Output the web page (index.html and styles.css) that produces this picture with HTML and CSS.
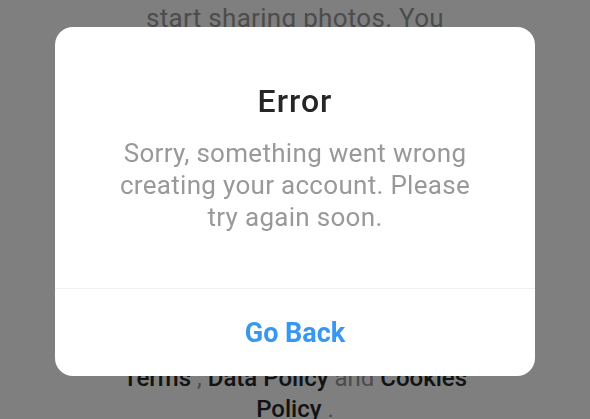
FILE: index.html
```html
<!DOCTYPE html>
<html lang="en">
<head>
<meta charset="utf-8">
<title>Error</title>
<link rel="stylesheet" href="styles.css">
</head>
<body>
<main class="page">
  <p class="intro">Find people to follow and start sharing photos. You can change your username anytime.</p>
  <p class="legal">By signing up, you agree to our <a class="link">Terms</a> , <a class="link">Data Policy</a> and <a class="link">Cookies Policy</a> .</p>
</main>
<div class="overlay">
  <div class="dialog" role="alertdialog">
    <div class="dialog-body">
      <h1 class="dialog-title">Error</h1>
      <p class="dialog-text">Sorry, something went wrong creating your account. Please try again soon.</p>
    </div>
    <button class="dialog-button" type="button">Go Back</button>
  </div>
</div>
</body>
</html>
```

FILE: styles.css
```css
html, body {
  margin: 0;
  padding: 0;
}

body {
  width: 590px;
  height: 419px;
  overflow: hidden;
  background: #ffffff;
  font-family: Roboto, "Liberation Sans", sans-serif;
}

.page {
  height: 419px;
  display: flex;
  flex-direction: column;
  justify-content: space-between;
  align-items: center;
  text-align: center;
}

.intro {
  width: 320px;
  margin: -30px 0 0;
  font-size: 26px;
  line-height: 32px;
  letter-spacing: 0.3px;
  color: #999999;
}

.legal {
  width: 360px;
  margin: 0 0 -6px;
  font-size: 24px;
  line-height: 31px;
  color: #999999;
}

.link {
  color: #262626;
  font-weight: 500;
}

.overlay {
  position: fixed;
  inset: 0;
  background: rgba(0, 0, 0, 0.5);
  display: flex;
  justify-content: center;
  align-items: flex-start;
  padding-top: 27px;
}

.dialog {
  width: 480px;
  background: #ffffff;
  border-radius: 18px;
  overflow: hidden;
  display: flex;
  flex-direction: column;
}

.dialog-body {
  padding: 56px 60px 55px;
  display: flex;
  flex-direction: column;
  align-items: center;
  gap: 18px;
  border-bottom: 1px solid #efefef;
  text-align: center;
}

.dialog-title {
  margin: 0;
  font-size: 32px;
  line-height: 36px;
  font-weight: 500;
  letter-spacing: 1px;
  color: #262626;
}

.dialog-text {
  margin: 0;
  font-size: 26px;
  line-height: 32px;
  letter-spacing: 0.3px;
  color: #999999;
}

.dialog-button {
  height: 87px;
  border: 0;
  background: transparent;
  padding: 0;
  font-family: inherit;
  font-size: 27px;
  font-weight: 700;
  color: #3897f0;
}
```
